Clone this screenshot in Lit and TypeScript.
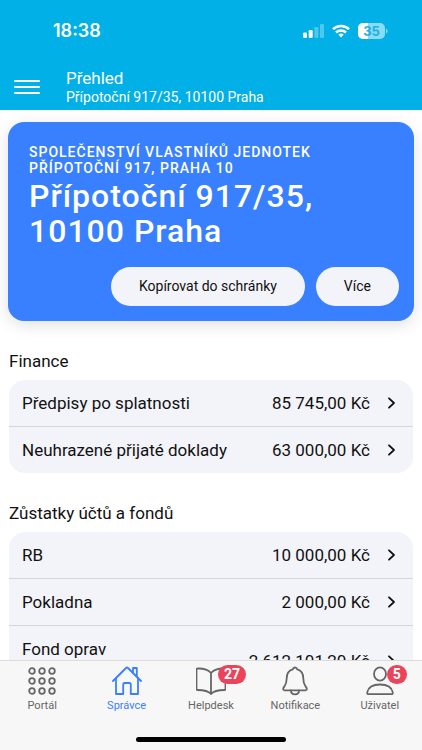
import { LitElement, html, css, svg } from "lit";
import { customElement, property } from "lit/decorators.js";

interface Row {
  label: string;
  amount: string;
  tall?: boolean;
}

interface Tab {
  label: string;
  icon: unknown;
  badge?: string;
  active?: boolean;
}

const finance: Row[] = [
  { label: "Předpisy po splatnosti", amount: "85 745,00 Kč" },
  { label: "Neuhrazené přijaté doklady", amount: "63 000,00 Kč" },
];

const balances: Row[] = [
  { label: "RB", amount: "10 000,00 Kč" },
  { label: "Pokladna", amount: "2 000,00 Kč" },
  { label: "Fond oprav", amount: "2 612 101,20 Kč", tall: true },
];

const gridIcon = svg`${[5, 15, 25].map((y) =>
  [5, 15, 25].map((x) => svg`<circle cx=${x} cy=${y} r="2.8"></circle>`)
)}`;

const homeIcon = svg`
  <path d="M4 12.500V28h7.200v-9.500q0-1.500 1.500-1.500h4.600q1.500 0 1.500 1.500V28H26V12.500"></path>
  <path d="M1 15 14 2q1-.9 2 0l13 13"></path>
  <path d="M21 6.500V2h3.800v8.500"></path>`;

const bookIcon = svg`
  <path d="M15 7C12 3.500 7 2.300 1.500 2.500q-1 0-1 1V23q0 1 1 1C7 24 12 24.500 15 28c3-3.500 8-4 13.500-4q1 0 1-1V3.500q0-1-1-1C23 2.300 18 3.500 15 7Zm0 0v21"></path>`;

const bellIcon = svg`
  <path d="M15 1.500c-1.300 0-2 .8-2.200 1.900C8.500 4.500 6.700 8 6.700 12.500c0 6.500-2.300 7.500-3.300 9.500-.6 1.300-.1 2.300 1.200 2.300h20.800c1.300 0 1.800-1 1.200-2.300-1-2-3.300-3-3.300-9.500 0-4.500-1.800-8-6.100-9.100C17 2.300 16.300 1.500 15 1.500Z"></path>
  <path d="M11 24.500c0 5.200 8 5.200 8 0"></path>`;

const userIcon = svg`
  <ellipse cx="15" cy="8" rx="6" ry="6.600"></ellipse>
  <path d="M2.200 26.500C3.300 20.800 9 18.500 15 18.500s11.700 2.300 12.800 8c.2 1-.3 1.700-1.300 1.700h-23c-1 0-1.500-.7-1.300-1.700Z"></path>`;

const tabs: Tab[] = [
  { label: "Portál", icon: gridIcon },
  { label: "Správce", icon: homeIcon, active: true },
  { label: "Helpdesk", icon: bookIcon, badge: "27" },
  { label: "Notifikace", icon: bellIcon },
  { label: "Uživatel", icon: userIcon, badge: "5" },
];

@customElement("status-bar")
export class StatusBar extends LitElement {
  static styles = css`
    :host {
      display: flex;
      justify-content: space-between;
      align-items: center;
      height: 24px;
      padding: 0 34px 0 53px;
      color: #fff;
    }
    .time {
      font: 600 18px/24px Inter, sans-serif;
    }
    .icons {
      display: flex;
      align-items: center;
      gap: 8px;
    }
    .digits {
      font: 700 13px Inter, sans-serif;
      fill: #22afe3;
    }
  `;

  render() {
    return html`
      <span class="time">18:38</span>
      <span class="icons">
        <svg width="21" height="14" viewBox="0 0 21 14" fill="#fff">
          <rect x="0" y="8.500" width="4" height="5.500" rx="1.200"></rect>
          <rect x="5.700" y="6" width="4" height="8" rx="1.200"></rect>
          <rect x="11.400" y="3" width="4" height="11" rx="1.200" opacity=".3"></rect>
          <rect x="17" y="0" width="4" height="14" rx="1.200" opacity=".3"></rect>
        </svg>
        <svg width="18" height="14" viewBox="0 0 18 14" fill="none" stroke="#fff" stroke-width="2.500">
          <path d="M1 5.200C5.400.8 12.600.8 17 5.200"></path>
          <path d="M4 8.500c2.800-2.700 7.200-2.700 10 0"></path>
          <path d="M6.300 10.600c1.500-1.400 3.900-1.400 5.400 0L9 13.500Z" fill="#fff" stroke="none"></path>
        </svg>
        <svg width="30" height="16" viewBox="0 0 30 16">
          <rect width="27" height="16" rx="5" fill="#8adbf5"></rect>
          <path d="M10 0H5a5 5 0 0 0-5 5v6a5 5 0 0 0 5 5h5Z" fill="#fff"></path>
          <path d="M28 5.500c2 .8 2 4.200 0 5Z" fill="#8adbf5"></path>
          <text class="digits" x="13.500" y="12.700" text-anchor="middle">35</text>
        </svg>
      </span>
    `;
  }
}

@customElement("amount-list")
export class AmountList extends LitElement {
  @property() heading = "";
  @property({ attribute: false }) rows: Row[] = [];

  static styles = css`
    :host {
      display: block;
    }
    h2 {
      margin: 0 0 7px;
      font-size: 17px;
      line-height: 24px;
      font-weight: 400;
    }
    .list {
      margin: 0;
      padding: 0;
      list-style: none;
      border-radius: 16px;
      background: #f3f4f9;
      overflow: hidden;
    }
    .item + .item {
      border-top: 1px solid #d4d5da;
    }
    .row {
      display: flex;
      align-items: center;
      min-height: 46px;
      box-sizing: border-box;
      padding: 11px 17px 11px 13px;
      color: inherit;
      text-decoration: none;
      font-size: 17px;
      line-height: 24px;
    }
    .tall {
      min-height: 70px;
    }
    .tall .label {
      align-self: flex-start;
    }
    .label {
      flex: 1;
    }
    .chevron {
      margin-left: 17px;
      fill: none;
      stroke: #111;
      stroke-width: 1.800;
      stroke-linecap: round;
      stroke-linejoin: round;
    }
  `;

  render() {
    return html`
      <h2>${this.heading}</h2>
      <ul class="list">
        ${this.rows.map(
          (r) => html`<li class="item">
            <a class="row ${r.tall ? "tall" : ""}" href="#">
              <span class="label">${r.label}</span>
              <span>${r.amount}</span>
              <svg class="chevron" width="9" height="12" viewBox="0 0 9 12">
                <path d="M2 1.300 7 6l-5 4.700"></path>
              </svg>
            </a>
          </li>`
        )}
      </ul>
    `;
  }
}

@customElement("tab-bar")
export class TabBar extends LitElement {
  static styles = css`
    :host {
      display: block;
      background: #f7f7f7;
      border-top: 1px solid #dcdcdc;
    }
    .tabs {
      display: grid;
      grid-template-columns: repeat(5, 1fr);
    }
    .tab {
      display: flex;
      flex-direction: column;
      align-items: center;
      gap: 2px;
      padding: 5px 0 0;
      color: #666;
      text-decoration: none;
      font-size: 11px;
      line-height: 16px;
    }
    .active {
      color: #3880ff;
    }
    .figure {
      position: relative;
      height: 30px;
    }
    .icon {
      display: block;
      fill: none;
      stroke: currentColor;
      stroke-width: 1.800;
      stroke-linejoin: round;
      stroke-linecap: round;
    }
    .badge {
      position: absolute;
      top: -1px;
      left: 22px;
      padding: 0 6px;
      border-radius: 10px;
      background: #eb445a;
      color: #fff;
      font-size: 14px;
      line-height: 19px;
      font-weight: 700;
    }
    .home {
      width: 150px;
      height: 5px;
      margin: 23px auto 8px;
      border-radius: 3px;
      background: #000;
    }
  `;

  render() {
    return html`
      <nav class="tabs">
        ${tabs.map(
          (t) => html`<a class="tab ${t.active ? "active" : ""}" href="#">
            <span class="figure">
              <svg class="icon" width="30" height="30" viewBox="0 0 30 30">${t.icon}</svg>
              ${t.badge ? html`<span class="badge">${t.badge}</span>` : ""}
            </span>
            <span>${t.label}</span>
          </a>`
        )}
      </nav>
      <div class="home"></div>
    `;
  }
}

@customElement("app-root")
export class AppRoot extends LitElement {
  static styles = css`
    :host {
      display: flex;
      flex-direction: column;
      height: 100vh;
      overflow: hidden;
      background: #fff;
      color: #111;
      font-family: Roboto, sans-serif;
    }
    .header {
      flex: none;
      padding-top: 19px;
      background: #02b0e8;
      color: #fff;
    }
    .toolbar {
      display: flex;
      align-items: center;
      gap: 26px;
      padding: 25px 14px 4px;
    }
    .menu {
      display: block;
      padding: 0;
      border: 0;
      background: none;
      color: inherit;
    }
    .menu svg {
      display: block;
    }
    .title {
      margin: 0;
      font-size: 17px;
      line-height: 20px;
      font-weight: 400;
    }
    .subtitle {
      margin: 0;
      font-size: 14px;
      line-height: 18px;
    }
    .content {
      flex: 1;
      min-height: 0;
      overflow: hidden;
    }
    .card {
      margin: 12px 8px 28px;
      padding: 22px 15px 15px 21px;
      border-radius: 16px;
      background: #3880ff;
      color: #fff;
      box-shadow: 0 4px 16px rgba(0, 0, 0, 0.12);
    }
    .owner {
      margin: 0;
      font-size: 14px;
      line-height: 16px;
      font-weight: 500;
      letter-spacing: 1px;
      text-transform: uppercase;
    }
    .address {
      margin: 3px 0 18px;
      font-size: 32px;
      line-height: 35px;
      font-weight: 500;
      letter-spacing: 1px;
    }
    .actions {
      display: flex;
      justify-content: flex-end;
      gap: 11px;
    }
    .pill {
      padding: 0 28px;
      border: 0;
      border-radius: 20px;
      background: #f3f4f9;
      color: #111;
      font: 400 14px/39px Roboto, sans-serif;
    }
    .section {
      margin: 0 9px 28px;
    }
    tab-bar {
      flex: none;
    }
  `;

  render() {
    return html`
      <header class="header">
        <status-bar></status-bar>
        <div class="toolbar">
          <button class="menu" aria-label="Menu">
            <svg width="26" height="18" viewBox="0 0 26 18" stroke="#fff" stroke-width="2" stroke-linecap="round">
              <path d="M1 3h24M1 9h24M1 15h24"></path>
            </svg>
          </button>
          <div>
            <h1 class="title">Přehled</h1>
            <p class="subtitle">Přípotoční 917/35, 10100 Praha</p>
          </div>
        </div>
      </header>
      <main class="content">
        <section class="card">
          <p class="owner">Společenství vlastníků jednotek<br />Přípotoční 917, Praha 10</p>
          <h2 class="address">Přípotoční 917/35,<br />10100 Praha</h2>
          <div class="actions">
            <button class="pill">Kopírovat do schránky</button>
            <button class="pill">Více</button>
          </div>
        </section>
        <amount-list class="section" heading="Finance" .rows=${finance}></amount-list>
        <amount-list class="section" heading="Zůstatky účtů a fondů" .rows=${balances}></amount-list>
      </main>
      <tab-bar></tab-bar>
    `;
  }
}
